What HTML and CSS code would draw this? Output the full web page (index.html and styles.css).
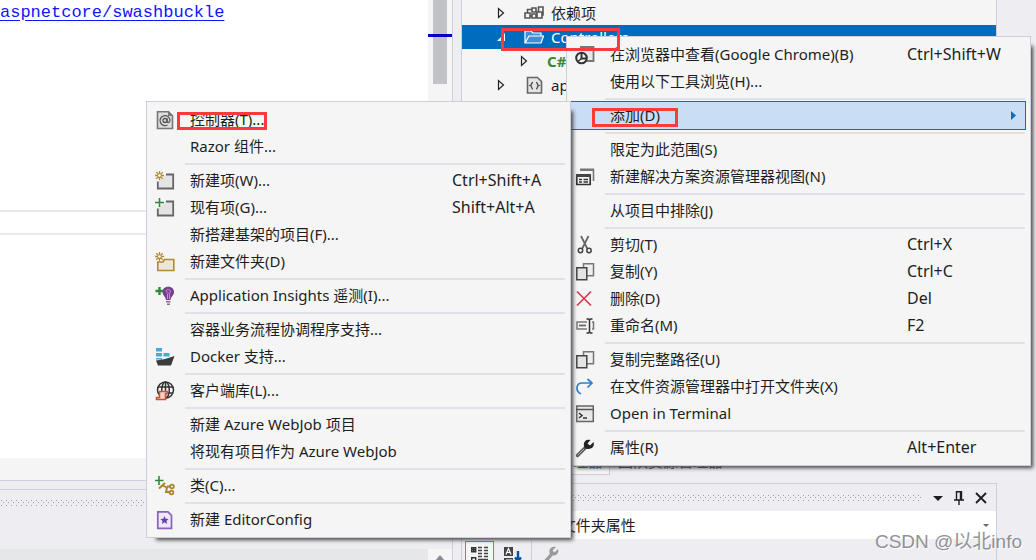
FILE: index.html
```html
<!DOCTYPE html>
<html lang="zh-CN">
<head>
<meta charset="utf-8">
<title>解决方案资源管理器</title>
<link rel="stylesheet" href="styles.css">
</head>
<body>
<div class="ide">
  <main class="left">
    <section class="editor">
      <div class="code">
        <a class="code-link" href="#swashbuckle">aspnetcore/swashbuckle</a>
        <div class="current-line"></div>
      </div>
      <div class="scroll-track"><div class="scroll-thumb"></div><div class="caret-mark"></div></div>
    </section>
    <div class="editor-foot"></div>
    <section class="output">
      <div class="grip"></div>
      <div class="output-bar"><span class="scroll-up"><svg width="10" height="6" viewBox="0 0 10 6"><path d="M0 6L5 0l5 6z" fill="#868999"/></svg></span></div>
    </section>
  </main>
  <aside class="right">
    <ul class="tree">
      <li class="node"><svg class="twisty" viewBox="0 0 8 12"><path d="M1.500 1.500v9l5-4.500z" fill="none" stroke="#222" stroke-width="1.200"/></svg><svg class="node-icon" viewBox="0 0 20 20"><g fill="none" stroke="#555" stroke-width="1.600"><path d="M1 10h5v5H1zM3.500 10V6.500H8M8 5h4v4H8zM8 11h4v4H8zM13 9h5v6h-5zM14.500 9V4H19v8h-1M6 13h2"/></g></svg><span>依赖项</span></li>
      <li class="node selected"><svg class="twisty" viewBox="0 0 8 12"><path d="M8 2v8H0z" fill="#fff"/></svg><svg class="node-icon" viewBox="0 0 20 20"><path d="M1 16V4h6l2 2h8v3M1 16L5 9h14.500L17 16z" fill="#3f8fd6" stroke="#fff" stroke-width="1.200"/></svg><span>Controllers</span></li>
      <li class="node child"><svg class="twisty" viewBox="0 0 8 12"><path d="M1.500 1.500v9l5-4.500z" fill="none" stroke="#222" stroke-width="1.200"/></svg><span class="csharp">C#</span></li>
      <li class="node"><svg class="twisty" viewBox="0 0 8 12"><path d="M1.500 1.500v9l5-4.500z" fill="none" stroke="#222" stroke-width="1.200"/></svg><svg class="node-icon" viewBox="0 0 20 20"><path d="M3.500 2.500h10l4 4v11.500h-14z" fill="#e4e4e4" stroke="#666" stroke-width="1.600"/><path d="M9 7.500c-2 0-1 2.500-2.500 3 1.500.5.500 3.500 2.500 3.500M12 7.500c2 0 1 2.500 2.500 3-1.500.5-.5 3.500-2.500 3.500" fill="none" stroke="#555" stroke-width="1.400"/></svg><span>appsettings.json</span></li>
    </ul>
    <nav class="tabs"><a class="tab active" href="#solution">解决方案资源管理器</a><a class="tab" href="#team">团队资源管理器</a></nav>
    <section class="props">
      <header class="props-head">
        <div class="grip"></div>
        <button class="tool" aria-label="窗口位置"><svg width="10" height="14" viewBox="0 0 10 14"><path d="M0 5h10L5 10z" fill="#1e1e1e"/></svg></button>
        <button class="tool" aria-label="自动隐藏"><svg width="10" height="14" viewBox="0 0 10 14"><path d="M2.500 9V.700h5V9M0 9h10M5 9v5M6.500 1v8" fill="none" stroke="#1e1e1e" stroke-width="1.400"/></svg></button>
        <button class="tool" aria-label="关闭"><svg width="12" height="14" viewBox="0 0 12 14"><path d="M1 2l10 10M11 2L1 12" stroke="#1e1e1e" stroke-width="1.800"/></svg></button>
      </header>
      <button class="combo"><span>Controllers 文件夹属性</span><svg width="6" height="3" viewBox="0 0 6 3"><path d="M0 0h6L3 3z" fill="#666"/></svg></button>
      <div class="props-tools">
        <button class="prop-btn pressed" aria-label="按分类顺序"><svg width="20" height="20" viewBox="0 0 20 20"><path d="M1.700 2.700h4v4h-4zM1.700 12.700h4v4h-4zM3.700 3v3M2 4.700h3" fill="none" stroke="#333" stroke-width="1.400"/><path d="M8 2.500h4M8 5.500h4M8 8.500h4M8 11.500h4M14 2.500h4M14 5.500h4M14 8.500h4M14 11.500h4M8 14.500h10" stroke="#444" stroke-width="1.300"/></svg></button>
        <button class="prop-btn" aria-label="字母顺序"><svg width="20" height="20" viewBox="0 0 20 20"><path d="M1 2h9v9H1zM1 13h9v7H1z" fill="#444"/><path d="M3 9.500l2.500-6 2.500 6M4 7.500h3M3 15h5l-5 4" fill="none" stroke="#fff" stroke-width="1.200"/><path d="M15 6v10M12 12.500l3 3.500 3-3.500" fill="none" stroke="#00539c" stroke-width="2.400"/></svg></button>
        <span class="divider"></span>
        <button class="prop-btn" aria-label="属性页"><svg width="20" height="20" viewBox="0 0 20 20"><path d="M3 18l7-8" stroke="#999" stroke-width="3.400" stroke-linecap="round"/><path d="M17 4l-3.500 3.500-2-2L15 2c-5-1.500-8 3-6 7 3 3 10 1 8-5z" fill="#999"/></svg></button>
      </div>
    </section>
  </aside>
</div>

<div class="menu menu-main" role="menu">
  <button class="item" role="menuitem"><svg class="icon" viewBox="0 0 20 20"><path d="M5 2h13.500v14H8" fill="#e8e8ea" stroke="#777" stroke-width="1.800"/><circle cx="6.500" cy="13" r="5.300" fill="#f5f5f5" stroke="#333" stroke-width="2"/><path d="M6.500 8v5.500h5.500" fill="none" stroke="#333" stroke-width="2"/><path d="M6.500 13.500L3 16.500" stroke="#333" stroke-width="1.500"/></svg><span class="label">在浏览器中查看(Google Chrome)(B)</span><span class="key">Ctrl+Shift+W</span></button>
  <button class="item" role="menuitem"><span class="label">使用以下工具浏览(H)...</span></button>
  <hr>
  <button class="item active" role="menuitem" aria-haspopup="true"><span class="label">添加(D)</span><svg class="more" viewBox="0 0 5 9"><path d="M0 0l5 4.500L0 9z" fill="#0070c6"/></svg></button>
  <hr>
  <button class="item" role="menuitem"><span class="label">限定为此范围(S)</span></button>
  <button class="item" role="menuitem"><svg class="icon" viewBox="0 0 20 20"><path d="M5 3h13.500v11" fill="none" stroke="#777" stroke-width="1.600"/><path d="M5 1.500h14v2.500H5z" fill="#777"/><path d="M1.800 7.800h13.400v9.700H1.800z" fill="#f5f5f5" stroke="#333" stroke-width="1.700"/><path d="M1 7h15v3H1z" fill="#444"/><path d="M4 12.500h3M8.500 12.500H13M4 15h3M8.500 15H13" stroke="#333" stroke-width="1.400"/></svg><span class="label">新建解决方案资源管理器视图(N)</span></button>
  <hr>
  <button class="item" role="menuitem"><span class="label">从项目中排除(J)</span></button>
  <hr>
  <button class="item" role="menuitem"><svg class="icon" viewBox="0 0 20 20"><path d="M6 1l6.500 13M13.500 1L7 14" fill="none" stroke="#666" stroke-width="1.700"/><circle cx="5.500" cy="15.500" r="2.200" fill="none" stroke="#444" stroke-width="1.500"/><circle cx="14" cy="15.500" r="2.200" fill="none" stroke="#444" stroke-width="1.500"/></svg><span class="label">剪切(T)</span><span class="key">Ctrl+X</span></button>
  <button class="item" role="menuitem"><svg class="icon" viewBox="0 0 20 20"><path d="M8.500 1.800h10v12h-10z" fill="#eee" stroke="#777" stroke-width="1.500"/><path d="M1.800 5.800h10v12h-10z" fill="#e4e4e4" stroke="#444" stroke-width="1.500"/></svg><span class="label">复制(Y)</span><span class="key">Ctrl+C</span></button>
  <button class="item" role="menuitem"><svg class="icon" viewBox="0 0 20 20"><path d="M2 2.500l14 14M16 2.500L2 16.500" stroke="#d13b4b" stroke-width="1.700"/></svg><span class="label">删除(D)</span><span class="key">Del</span></button>
  <button class="item" role="menuitem"><svg class="icon" viewBox="0 0 20 20"><path d="M12 6H2v7h10M17 6h1.500v7H17" fill="none" stroke="#777" stroke-width="1.500"/><path d="M4 9.500h7" stroke="#666" stroke-width="1.800"/><path d="M11.500 3h2l1 1 1-1h2M14.500 4v12M11.500 17h2l1-1 1 1h2" fill="none" stroke="#333" stroke-width="1.500"/></svg><span class="label">重命名(M)</span><span class="key">F2</span></button>
  <hr>
  <button class="item" role="menuitem"><svg class="icon" viewBox="0 0 20 20"><path d="M8.500 1.800h10v12h-10z" fill="#eee" stroke="#777" stroke-width="1.500"/><path d="M1.800 5.800h10v12h-10z" fill="#e4e4e4" stroke="#444" stroke-width="1.500"/></svg><span class="label">复制完整路径(U)</span></button>
  <button class="item" role="menuitem"><svg class="icon" viewBox="0 0 20 20"><path d="M6 17C0 14 1 6 7 6h9.500M12.500 2l4.500 4-4.500 4.500" fill="none" stroke="#2f7fd0" stroke-width="1.700"/></svg><span class="label">在文件资源管理器中打开文件夹(X)</span></button>
  <button class="item" role="menuitem"><svg class="icon" viewBox="0 0 20 20"><path d="M1.800 2h16.500v15.500H1.800z" fill="#e8e8e8" stroke="#666" stroke-width="1.500"/><path d="M1 5.500h18" stroke="#555" stroke-width="1.500"/><path d="M4 9l3 2.500L4 14M8 14h4" fill="none" stroke="#333" stroke-width="1.500"/></svg><span class="label">Open in Terminal</span></button>
  <hr>
  <button class="item" role="menuitem"><svg class="icon" viewBox="0 0 20 20"><path d="M2.500 17.500L11 9" stroke="#555" stroke-width="3.200" stroke-linecap="round"/><path d="M2.700 17.300L9 11" stroke="#bbb" stroke-width="1"/><path d="M18.500 4l-3.500 3.500-2.500-2L15.500 2C10 .500 7.500 5 9.500 9.500c4 3.500 11 .5 9-5.500z" fill="#222"/></svg><span class="label">属性(R)</span><span class="key">Alt+Enter</span></button>
</div>

<div class="menu menu-add" role="menu">
  <button class="item" role="menuitem"><svg class="icon" viewBox="0 0 20 20"><path d="M2.500 1.800h11l4 4v12.700h-15z" fill="#ddd" stroke="#777" stroke-width="1.600"/><path d="M13 1v5h5z" fill="#777"/><circle cx="10" cy="10.500" r="2" fill="none" stroke="#555" stroke-width="1.300"/><path d="M12 8v3.500c.5 1.800 3 1 3-1.500a5 5 0 1 0-2.500 5" fill="none" stroke="#555" stroke-width="1.300"/></svg><span class="label">控制器(T)...</span></button>
  <button class="item" role="menuitem"><span class="label">Razor 组件...</span></button>
  <hr>
  <button class="item" role="menuitem"><svg class="icon" viewBox="0 0 20 20"><path d="M11 3.500h7.200v14H2.800v-7" fill="#e4e4e4" stroke="#666" stroke-width="1.800"/><path d="M4.500 0v9M0 4.500h9M1.300 1.300l6.400 6.400M7.700 1.300L1.300 7.700" stroke="#b08a35" stroke-width="1.300"/><circle cx="4.500" cy="4.500" r="1.300" fill="#fff"/></svg><span class="label">新建项(W)...</span><span class="key">Ctrl+Shift+A</span></button>
  <button class="item" role="menuitem"><svg class="icon" viewBox="0 0 20 20"><path d="M11 3.500h7.200v14H2.800v-7" fill="#e4e4e4" stroke="#666" stroke-width="1.800"/><path d="M4.500 0v9M0 4.500h9" stroke="#2c8a38" stroke-width="1.600"/></svg><span class="label">现有项(G)...</span><span class="key">Shift+Alt+A</span></button>
  <button class="item" role="menuitem"><span class="label">新搭建基架的项目(F)...</span></button>
  <button class="item" role="menuitem"><svg class="icon" viewBox="0 0 20 20"><path d="M2.800 10v8.500h16v-11H9.500L8 10z" fill="#ede7d8" stroke="#b08a35" stroke-width="1.600"/><path d="M4.500 0v9M0 4.500h9M1.300 1.300l6.400 6.400M7.700 1.300L1.300 7.700" stroke="#b08a35" stroke-width="1.300"/><circle cx="4.500" cy="4.500" r="1.300" fill="#fff"/></svg><span class="label">新建文件夹(D)</span></button>
  <hr>
  <button class="item" role="menuitem"><svg class="icon" viewBox="0 0 20 20"><path d="M7.500 6c0-7 11.500-7 11.500 0 0 3.500-3 4-3.500 8h-4.500C10.500 10 7.500 9.500 7.500 6z" fill="#7a3b91"/><path d="M11 5.500c0-2.500 4.500-2.500 4.500 0s-4 2-4 0M12.500 8v5M14.500 8v5" fill="none" stroke="#c9a5d6" stroke-width=".9"/><path d="M11 15.800h4.500M12 18.300h3" stroke="#8a6a9a" stroke-width="1.400"/><path d="M4.500 1v8M.500 5h8" stroke="#2c8a38" stroke-width="2.400"/></svg><span class="label">Application Insights 遥测(I)...</span></button>
  <hr>
  <button class="item" role="menuitem"><span class="label">容器业务流程协调程序支持...</span></button>
  <button class="item" role="menuitem"><svg class="icon" viewBox="0 0 20 20"><path d="M1 1h6v3.500H1zM1 6h6v3.500H1zM8.500 6h6v3.500h-6zM1 11h6v1.500H1z" fill="#49a9d4"/><path d="M1 13.500l9-1.500 9.500-3-3.500 9.500H3z" fill="#3c3c3c"/></svg><span class="label">Docker 支持...</span></button>
  <hr>
  <button class="item" role="menuitem"><svg class="icon" viewBox="0 0 20 20"><g fill="none" stroke="#333" stroke-width="1.500"><circle cx="10.500" cy="9" r="8"/><ellipse cx="10.500" cy="9" rx="3.800" ry="8"/><path d="M3 6h15M3 12h15M10.500 1v16"/></g><path d="M4.500 10.500h8v2h-2v6H1.500v-2h3z" fill="#f5d5cc" stroke="#d0513a" stroke-width="1.600"/></svg><span class="label">客户端库(L)...</span></button>
  <hr>
  <button class="item" role="menuitem"><span class="label">新建 Azure WebJob 项目</span></button>
  <button class="item" role="menuitem"><span class="label">将现有项目作为 Azure WebJob</span></button>
  <hr>
  <button class="item" role="menuitem"><svg class="icon" viewBox="0 0 20 20"><path d="M4 0v9M0 4.500h8.500" stroke="#2c8a38" stroke-width="1.600"/><path d="M4 12.500l6-5.500M7.500 9.500l4.500 2-1 4.500h4M12 10.500h4" fill="none" stroke="#a8832a" stroke-width="1.900"/><g fill="#f5f5f5" stroke="#a8832a" stroke-width="1.600"><circle cx="17" cy="10.500" r="1.900"/><circle cx="16.500" cy="16.500" r="1.900"/></g></svg><span class="label">类(C)...</span></button>
  <hr>
  <button class="item" role="menuitem"><svg class="icon" viewBox="0 0 20 20"><path d="M2.800 1.800H13l3.500 3.500v13H2.800z" fill="#f0e8f8" stroke="#8a62b8" stroke-width="1.700"/><path d="M9.500 6l1.200 2.800 3 .2-2.300 2 .8 3-2.700-1.700L6.800 14l.8-3-2.300-2 3-.2z" fill="#6b3fa8"/></svg><span class="label">新建 EditorConfig</span></button>
</div>

<div class="mark mark-folder"></div>
<div class="mark mark-add"></div>
<div class="mark mark-controller"></div>
<div class="watermark">CSDN @以北info</div>
</body>
</html>
```
FILE: styles.css
```css
* { box-sizing: border-box; }
body {
  margin: 0;
  font: 15px/24px "Noto Sans", "Noto Sans CJK SC", sans-serif;
  color: #1e1e1e;
  background: #eeeef2;
  overflow: hidden;
}
button { font: inherit; color: inherit; border: 0; background: none; padding: 0; text-align: left; }
svg { display: block; flex: none; }
.ide { display: flex; height: 100vh; padding-right: 39px; }
.left { width: 453px; flex: none; display: flex; flex-direction: column; }
.editor { flex: 1; display: flex; background: #fff; border-right: 1px solid #cccedb; }
.code { flex: 1; padding-top: 1px; }
.code-link { display: block; font: 17px/24px "Liberation Mono", monospace; color: #1414ff; text-underline-offset: 3px; }
.current-line { height: 25px; margin-top: 185px; border: 2px solid #e9e9f1; border-width: 2px 0; }
.scroll-track { width: 24px; background: #f5f5f5; position: relative; }
.scroll-thumb { width: 14px; height: 84px; margin-left: 5px; background: #c2c3c9; }
.caret-mark { position: absolute; left: 0; right: 0; top: 34px; height: 3px; background: #0000cd; }
.editor-foot { height: 23px; background: #f5f5f5; border: solid #cccedb; border-width: 0 1px 1px 0; }
.output { height: 71px; margin-top: 8px; border: solid #cccedb; border-width: 1px 1px 0 0; display: flex; flex-direction: column; justify-content: space-between; padding-top: 10px; }
.grip {
  height: 6px;
  background:
    linear-gradient(90deg, transparent 1px, #999aa2 1px 2px, transparent 2px) 0 0 / 5px 1px repeat-x,
    linear-gradient(90deg, transparent 3px, #999aa2 3px 4px, transparent 4px) 0 2px / 5px 1px repeat-x,
    linear-gradient(90deg, transparent 1px, #999aa2 1px 2px, transparent 2px) 0 5px / 5px 1px repeat-x;
}
.output-bar { height: 11px; background: #e6e7e8; display: flex; justify-content: flex-end; }
.scroll-up { width: 24px; background: #f5f5f5; padding: 6px 7px 0; overflow: hidden; }
.right { flex: 1; min-width: 0; margin-left: 8px; display: flex; flex-direction: column; }
.tree { flex: 1; margin: 0; padding: 1px 0 0; list-style: none; background: #f5f5f5; border: solid #cccedb; border-width: 0 1px; }
.node { display: flex; align-items: center; height: 24px; padding-left: 35px; }
.node.selected { background: #006cbe; color: #fff; }
.node.child { padding-left: 58px; }
.twisty { width: 8px; height: 12px; margin-right: 19px; }
.node-icon { width: 20px; height: 20px; margin-right: 7px; }
.csharp { color: #388a34; font-weight: 700; }
.tabs { display: flex; height: 26px; }
.tab { padding: 0 8px; color: #444; text-decoration: none; white-space: nowrap; }
.tab.active { width: 149px; padding: 0 6px; background: #f5f5f5; color: #0e70c0; border: solid #cccedb; border-width: 0 1px 1px; }
.props { height: 77px; margin-top: 8px; border: solid #cccedb; border-width: 1px 1px 0; }
.props-head { display: flex; align-items: center; gap: 11px; height: 27px; padding-right: 9px; }
.props-head .grip { flex: 1; }
.combo { display: flex; width: 100%; height: 28px; align-items: center; justify-content: space-between; padding: 0 7px 0 17px; background: #fff; }
.props-tools { display: flex; gap: 4px; padding: 2px 3px 0; height: 21px; overflow: hidden; }
.prop-btn { width: 29px; height: 28px; padding: 3px 4px; border: 1px solid transparent; }
.prop-btn.pressed { border-color: #3399ff; background: #f5f5f5; }
.divider { width: 1px; background: #cccedb; }

.menu { position: absolute; padding: 4px 0; background: #f5f5f5; border: 1px solid #cccedb; box-shadow: 6px 6px 4px -4px #444; }
.menu-main { left: 566px; top: 36px; width: 465px; }
.menu-add { left: 146px; top: 101px; width: 425px; }
.item { display: grid; width: 100%; height: 27px; align-items: center; padding-left: 8px; white-space: nowrap; }
.menu-main .item { grid-template-columns: 35px 297px 1fr; }
.menu-add .item { grid-template-columns: 35px 262px 1fr; }
.icon { width: 20px; height: 20px; grid-column: 1; grid-row: 1; }
.label { grid-column: 2; grid-row: 1; padding-bottom: 1px; }
.key { grid-column: 3; grid-row: 1; padding-bottom: 1px; font-size: 16px; }
.item.active { width: calc(100% - 5px); background: #c9def5; outline: 1px solid #0070c6; }
.more { grid-column: 3; grid-row: 1; justify-self: end; width: 5px; height: 9px; margin-right: 9px; }
hr { height: 2px; margin: 3px 5px 2px 38px; border: 0; background: #dee1e7; }

.mark { position: absolute; border: 3px solid #fd3a3a; }
.mark-folder { left: 501px; top: 28px; width: 119px; height: 23px; }
.mark-add { left: 592px; top: 108px; width: 86px; height: 19px; }
.mark-controller { left: 177px; top: 112px; width: 90px; height: 18px; }
.watermark { position: absolute; right: 14px; bottom: 6px; font: 19px/24px "Liberation Sans", "Noto Sans CJK SC", sans-serif; color: #919197; text-shadow: 1px 1px 1px #fff; }
```
